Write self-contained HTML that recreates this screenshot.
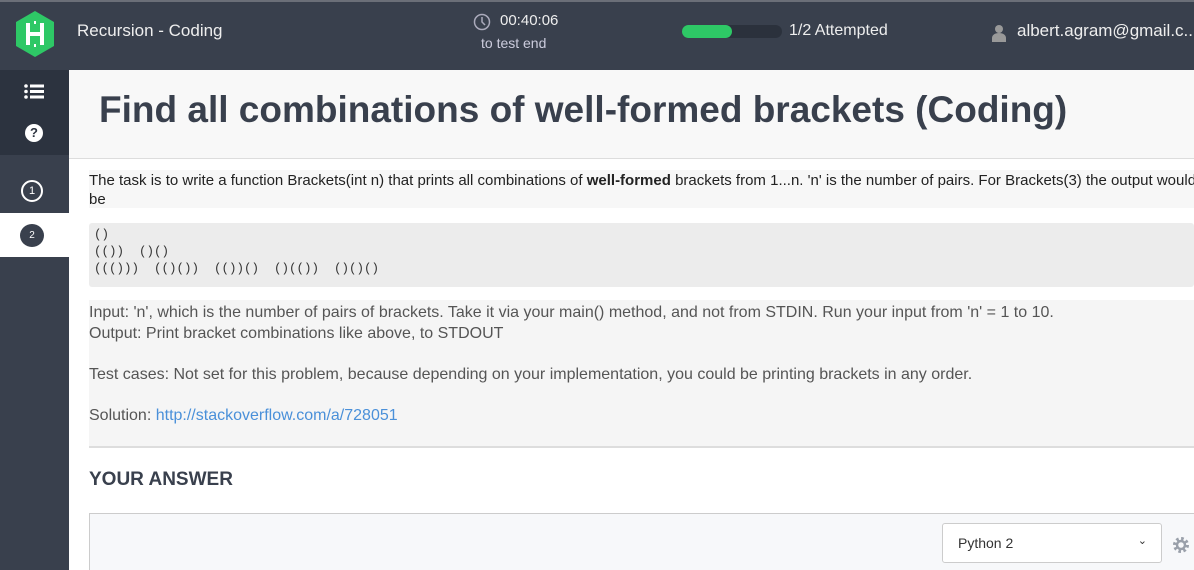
<!DOCTYPE html>
<html><head><style>
*{margin:0;padding:0;box-sizing:border-box}
body{width:1194px;height:570px;overflow:hidden;background:#fff;font-family:"Liberation Sans",sans-serif;position:relative}
.hdr{position:absolute;left:0;top:0;width:1194px;height:70px;background:#39404d;border-top:2px solid #6b6f78;color:#fff;overflow:hidden}
.side{position:absolute;left:0;top:70px;width:69px;height:500px;background:#39404d}
.sidetop{position:absolute;left:0;top:70px;width:69px;height:85px;background:#2c333f}
.abs{position:absolute}
.main{position:absolute;left:69px;top:70px;width:1125px;height:500px;overflow:hidden}
</style></head><body>
<div class="hdr">
 <svg class="abs" style="left:14px;top:8px" width="42" height="48" viewBox="0 0 42 48"><polygon points="21,1 40,12 40,36 21,47 2,36 2,12" fill="#2ec866"/><path d="M14 13v22M28 13v22M14 24h14" stroke="#fff" stroke-width="4"/><path d="M21 14v-3M21 34v3" stroke="#fff" stroke-width="2"/></svg>
 <div class="abs" style="left:77px;top:19px;font-size:17px;color:#eee">Recursion - Coding</div>
 <svg class="abs" style="left:473px;top:11px" width="18" height="18" viewBox="0 0 18 18"><circle cx="9" cy="9" r="7.5" fill="none" stroke="#aab" stroke-width="1.5"/><path d="M9 4v5l3 3" stroke="#aab" stroke-width="1.5" fill="none"/></svg>
 <div class="abs" style="left:500px;top:10px;font-size:15px;color:#eee">00:40:06</div>
 <div class="abs" style="left:481px;top:33px;font-size:14px;color:#ccd">to test end</div>
 <div class="abs" style="left:682px;top:23px;width:100px;height:13px;border-radius:7px;background:#2b313c"><div style="width:50px;height:13px;border-radius:7px;background:#2ec866"></div></div>
 <div class="abs" style="left:789px;top:20px;font-size:16px;color:#eee">1/2 Attempted</div>
 <svg class="abs" style="left:991px;top:22px" width="16" height="18" viewBox="0 0 16 18"><circle cx="8" cy="5" r="4" fill="#999"/><path d="M1 18v-4c0-3 3-5 7-5s7 2 7 5v4z" fill="#999"/></svg>
 <div class="abs" style="left:1017px;top:19px;font-size:17px;color:#eee;white-space:nowrap">albert.agram@gmail.c..</div>
</div>
<div class="side"></div>
<div class="sidetop"></div>
<svg class="abs" style="left:24px;top:84px" width="20" height="15" viewBox="0 0 20 15"><g fill="#fff"><circle cx="2" cy="2" r="1.8"/><circle cx="2" cy="7.5" r="1.8"/><circle cx="2" cy="13" r="1.8"/><rect x="6" y="0.5" width="14" height="3"/><rect x="6" y="6" width="14" height="3"/><rect x="6" y="11.5" width="14" height="3"/></g></svg>
<div class="abs" style="left:25px;top:124px;width:18px;height:18px;border-radius:50%;background:#fff;color:#2c333f;font-size:13px;font-weight:bold;text-align:center;line-height:18px">?</div>
<div class="abs" style="left:21px;top:180px;width:22px;height:22px;border-radius:50%;border:2px solid #fff;color:#fff;font-size:11px;text-align:center;line-height:18px">1</div>
<div class="abs" style="left:0;top:213px;width:69px;height:44px;background:#fff"></div>
<div class="abs" style="left:20px;top:224px;width:24px;height:23px;border-radius:50%;background:#39404d;color:#fff;font-size:10px;text-align:center;line-height:23px">2</div>
<div class="main">
 <div class="abs" style="left:0;top:0;width:1125px;height:89px;background:#f8f8f8;border-bottom:1px solid #ddd"></div>
 <div class="abs" style="left:30px;top:19px;font-size:37px;font-weight:bold;color:#39404d;white-space:nowrap">Find all combinations of well-formed brackets (Coding)</div>
 <div class="abs" style="left:20px;top:100px;width:1105px;height:38px;background:#f7f7f7"></div>
 <div class="abs" style="left:20px;top:101px;font-size:15px;color:#222;line-height:19px;white-space:nowrap">The task is to write a function Brackets(int n) that prints all combinations of <b>well-formed</b> brackets from 1...n. 'n' is the number of pairs. For Brackets(3) the output would<br>be</div>
 <div class="abs" style="left:20px;top:153px;width:1105px;height:64px;background:#ececec;border-radius:3px"></div>
 <pre class="abs" style="left:25px;top:157px;font-family:'Liberation Mono',monospace;font-size:12.5px;line-height:17px;color:#333">()
(())  ()()
((()))  (()())  (())()  ()(())  ()()()</pre>
 <div class="abs" style="left:20px;top:230px;width:1105px;height:148px;background:#f5f5f5;border-bottom:2px solid #ddd"></div>
 <div class="abs" style="left:20px;top:233px;font-size:16px;color:#555;line-height:20.5px;white-space:nowrap">Input: 'n', which is the number of pairs of brackets. Take it via your main() method, and not from STDIN. Run your input from 'n' = 1 to 10.<br>Output: Print bracket combinations like above, to STDOUT<br><br>Test cases: Not set for this problem, because depending on your implementation, you could be printing brackets in any order.<br><br>Solution: <span style="color:#4a90d9">http://stackoverflow.com/a/728051</span></div>
 <div class="abs" style="left:20px;top:399px;font-size:19px;font-weight:bold;color:#39404d">YOUR ANSWER</div>
 <div class="abs" style="left:20px;top:443px;width:1110px;height:70px;background:#f7f8fa;border:1px solid #ccc"></div>
 <div class="abs" style="left:873px;top:453px;width:220px;height:40px;background:#fff;border:1px solid #ccc;border-radius:3px;font-size:14px;color:#333;padding:11px 15px">Python 2<span style="position:absolute;right:14px;top:10px;font-size:11px">&#8964;</span></div>
 <svg class="abs" style="left:1103px;top:466px" width="18" height="18" viewBox="0 0 18 18"><circle cx="9" cy="9" r="6" fill="none" stroke="#9aa0aa" stroke-width="4" stroke-dasharray="2.4 2.3"/><circle cx="9" cy="9" r="4" fill="none" stroke="#9aa0aa" stroke-width="2.5"/></svg>
</div>
</body></html>
